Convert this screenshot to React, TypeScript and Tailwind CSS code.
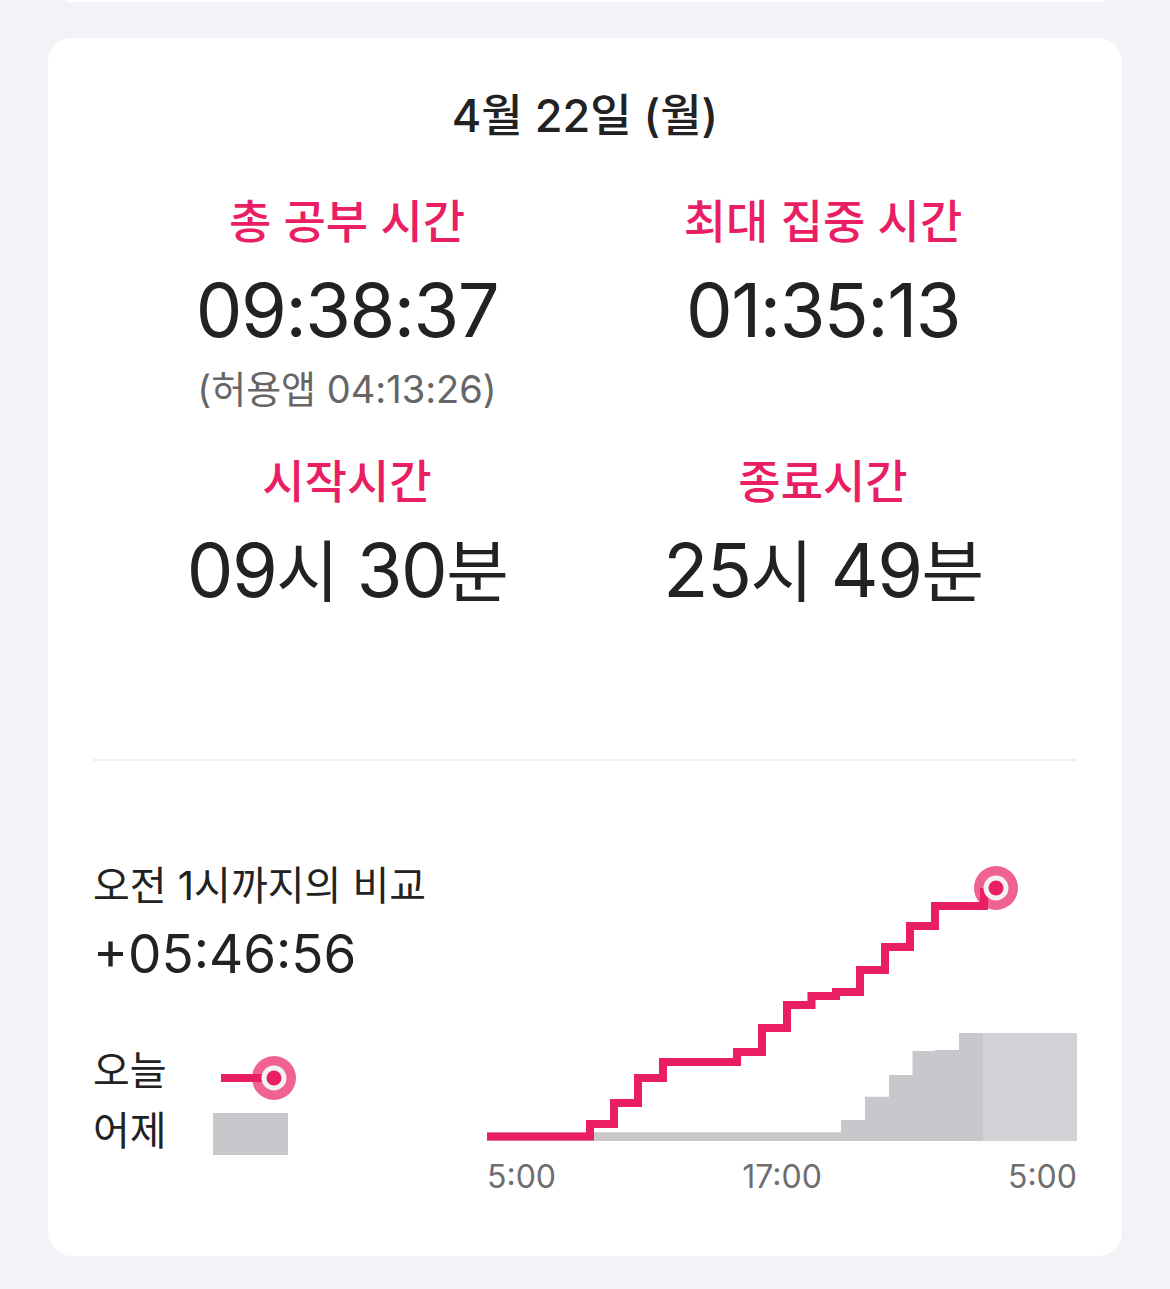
const stat = [
  { label: '총 공부 시간', value: '09:38:37', sub: '(허용앱 04:13:26)' },
  { label: '최대 집중 시간', value: '01:35:13', sub: null },
];

const times = [
  { label: '시작시간', h: '09', m: '30' },
  { label: '종료시간', h: '25', m: '49' },
];

function Chart() {
  return (
    <div className="mt-[99px] w-[590px] shrink-0">
      <svg width="590" height="285" viewBox="0 0 590 285" className="block overflow-visible">
        <polygon
          points="0,281 0,272.3 354,272.3 354,260 378,260 378,236.7 402,236.7 402,215 425.5,215 425.5,191 448,191 448,190 472,190 472,173 496,173 496,281"
          fill="#c7c7cc"
        />
        <rect x="496" y="173" width="94" height="108" fill="#d1d1d6" />
        <circle cx="509" cy="28" r="22" fill="#f06292" />
        <path
          d="M0 276.5 H103 V264 H127 V243 H151 V218 H176 V202 H250 V192 H275 V168 H300 V145 H324.5 V136 H349 V132 H373 V110 H398 V87 H423 V66 H448 V46 H497 V28"
          fill="none"
          stroke="#e91e63"
          strokeWidth="8"
        />
        <circle cx="509" cy="28" r="12.5" fill="#f2f2f7" />
        <circle cx="509" cy="28" r="7.5" fill="#e91e63" />
      </svg>
      <div className="mt-[12px] flex justify-between text-[32px] leading-[40px] text-[#6d6d72]">
        <span>5:00</span>
        <span>17:00</span>
        <span>5:00</span>
      </div>
    </div>
  );
}

export default function App() {
  return (
    <div className="min-h-[1289px] w-[1170px] bg-[#f2f2f7] font-['Inter','Noto_Sans_CJK_KR',sans-serif] text-[#222222]">
      <div className="mx-[66px] h-[2px] bg-white" />
      <div className="mx-[48px] mt-[36px] h-[1218px] rounded-[24px] bg-white px-[45px] pt-[53px]">
        <div className="text-center text-[45px] font-medium leading-[50px]">4월 22일 (월)</div>

        <div className="mx-auto mt-[54px] grid w-[952px] grid-cols-2 text-center">
          {stat.map((s) => (
            <div key={s.label} className="flex flex-col items-center">
              <div className="text-[46px] font-medium leading-[52px] text-[#e91e63]">{s.label}</div>
              <div className="mt-[23px] text-[74px] leading-[80px] tracking-[-1.5px]">{s.value}</div>
              {s.sub && (
                <div className="mt-[17px] text-[38px] leading-[44px] text-[#666666]">{s.sub}</div>
              )}
            </div>
          ))}
        </div>

        <div className="mx-auto mt-[44px] grid w-[952px] grid-cols-2 text-center">
          {times.map((t) => (
            <div key={t.label} className="flex flex-col items-center">
              <div className="text-[46px] font-medium leading-[52px] text-[#e91e63]">{t.label}</div>
              <div className="mt-[23px] h-[80px] text-[74px] leading-[80px] tracking-[-1.5px]">
                {t.h}
                <span className="text-[68px]">시</span> {t.m}
                <span className="text-[68px]">분</span>
              </div>
            </div>
          ))}
        </div>

        <div className="mt-[149px] h-[2px] bg-[#efeff1]" />

        <div className="flex">
          <div className="flex-1">
            <div className="mt-[102px] text-[40px] leading-[46px]">오전 1시까지의 비교</div>
            <div className="mt-[15px] text-[53px] leading-[60px]">+05:46:56</div>
            <div className="mt-[64px] flex items-start">
              <span className="w-[120px] text-[40px] leading-[46px]">오늘</span>
              <svg width="84" height="46" className="block overflow-visible">
                <circle cx="61" cy="30" r="22" fill="#f06292" />
                <line x1="8" y1="30" x2="56" y2="30" stroke="#e91e63" strokeWidth="8" />
                <circle cx="61" cy="30" r="12.5" fill="#f2f2f7" />
                <circle cx="61" cy="30" r="7.5" fill="#e91e63" />
              </svg>
            </div>
            <div className="mt-[14px] flex items-start">
              <span className="w-[120px] text-[40px] leading-[46px]">어제</span>
              <div className="mt-[5px] h-[42px] w-[75px] bg-[#c7c7cc]" />
            </div>
          </div>
          <Chart />
        </div>
      </div>
    </div>
  );
}
